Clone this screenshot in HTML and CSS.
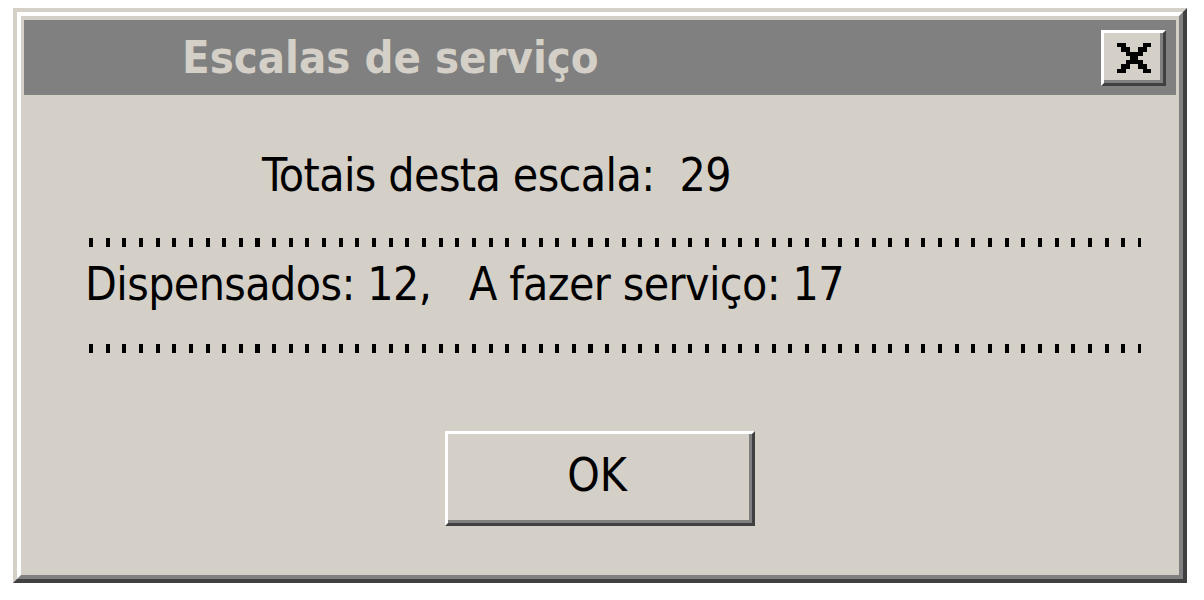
FILE: index.html
```html
<!DOCTYPE html>
<html lang="pt">
<head>
    <meta charset="UTF-8">
    <title>Escalas de serviço</title>
    <link rel="stylesheet" href="styles.css">
</head>
<body>

    <div class="window">
        <div class="window-inner">
            <div class="title-bar">
                <span class="title">Escalas de serviço</span>
                <button class="close-button" aria-label="Fechar">
                    <svg width="34" height="30" viewBox="0 0 8 7" shape-rendering="crispEdges">
                        <path d="M0 0h2v1h-2z M6 0h2v1h-2z M1 1h2v1h-2z M5 1h2v1h-2z M2 2h4v1h-4z M3 3h2v1h-2z M2 4h4v1h-4z M1 5h2v1h-2z M5 5h2v1h-2z M0 6h2v1h-2z M6 6h2v1h-2z" fill="#000"/>
                    </svg>
                </button>
            </div>

            <div class="dialog-body">
                <p class="total">Totais desta escala:  29</p>
                <div class="dots"></div>
                <p class="detail">Dispensados: 12,   A fazer serviço: 17</p>
                <div class="dots dots-bottom"></div>
                <div class="actions">
                    <button class="ok-button">OK</button>
                </div>
            </div>
        </div>
    </div>

</body>
</html>
```

FILE: styles.css
```css
body {
    margin: 0;
    padding: 0;
    background-color: #ffffff;
    font-family: "DejaVu Sans Condensed", "DejaVu Sans", sans-serif;
    color: #000;
}

/* janela */
.window {
    margin: 8px 0 0 13px;
    width: 1174px;
    box-sizing: border-box;
    border: 4px solid;
    border-color: #d4d0c8 #404040 #404040 #d4d0c8;
    background-color: #d4d0c8;
}

.window-inner {
    border: 4px solid;
    border-color: #ffffff #808080 #808080 #ffffff;
    padding: 4px 3px 0 3px;
}

.title-bar {
    height: 75px;
    background-color: #808080;
    display: flex;
    align-items: center;
    justify-content: space-between;
    padding: 0 10px 0 158px;
}

.title {
    color: #d4d0c8;
    font-weight: bold;
    font-size: 45px;
    line-height: 1;
    white-space: pre;
}

.close-button {
    width: 65px;
    height: 56px;
    padding: 0;
    display: flex;
    align-items: center;
    justify-content: center;
    background-color: #d4d0c8;
    border: 3px solid;
    border-color: #ffffff #404040 #404040 #ffffff;
    box-shadow: inset -3px -3px #808080;
    cursor: pointer;
}

/* conteúdo */
.dialog-body {
    padding: 50px 0 49px 0;
}

.total, .detail {
    margin: 0;
    font-size: 46px;
    letter-spacing: -0.6px;
    line-height: 60px;
    white-space: pre;
}

.total {
    padding-left: 238px;
}

.detail {
    margin-top: 7px;
    padding-left: 61px;
}

.dots {
    margin: 33px 0 0 65px;
    width: 1052px;
    height: 9px;
    background: repeating-linear-gradient(90deg, #000 0 4px, transparent 4px 16.65px);
}

.dots-bottom {
    margin-top: 30px;
}

.actions {
    display: flex;
    justify-content: center;
    margin-top: 78px;
}

.ok-button {
    width: 310px;
    height: 95px;
    font-family: "DejaVu Sans Condensed", "DejaVu Sans", sans-serif;
    font-size: 46px;
    color: #000;
    background-color: #d4d0c8;
    border: 3px solid;
    border-color: #ffffff #404040 #404040 #ffffff;
    box-shadow: inset -3px -3px #808080;
    padding: 0 6px 8px 0;
    cursor: pointer;
}
```
